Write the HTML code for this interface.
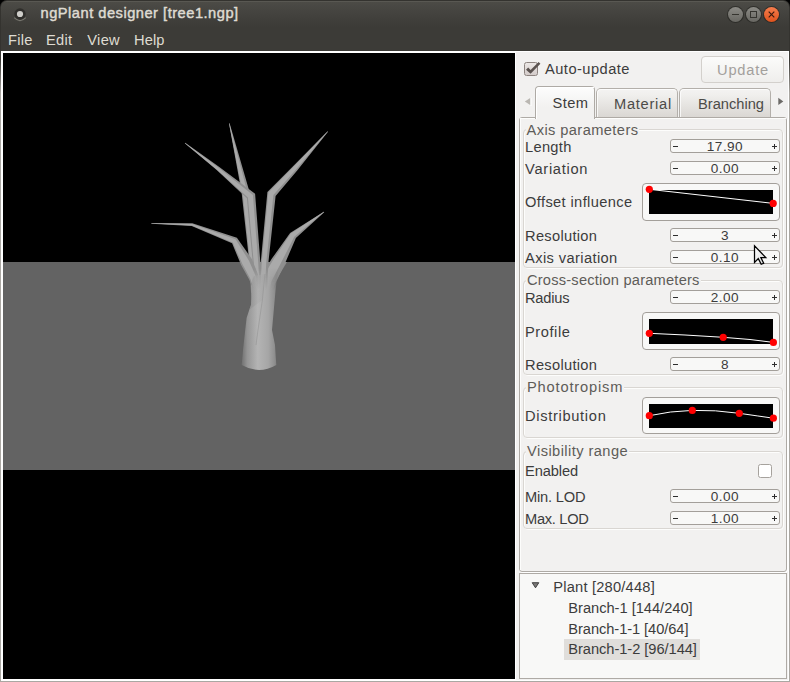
<!DOCTYPE html>
<html><head><meta charset="utf-8">
<style>
*{margin:0;padding:0;box-sizing:border-box}
html,body{width:790px;height:682px;overflow:hidden;background:#000}
body{position:relative;font-family:"Liberation Sans",sans-serif}
.a{position:absolute}
.t{position:absolute;white-space:pre;font-size:14.67px;line-height:14.67px;color:#3c3c3c;letter-spacing:0.3px}
#title{position:absolute;left:0;top:0;width:790px;height:51px;background:linear-gradient(#4c4b46 0px,#3c3b37 26px,#3c3b37 50px);border-radius:6px 6px 0 0}
.menu{position:absolute;white-space:pre;font-size:14.67px;line-height:14.67px;color:#dfdbd2;letter-spacing:0.3px}
.spin{position:absolute;left:670px;width:110px;height:14px;border:1px solid #a39f9a;border-radius:3px;background:#f8f8f7}
.spin .mi{position:absolute;left:2px;top:6px;width:5px;height:1px;background:#2e2e2e}
.spin .pl1{position:absolute;right:2px;top:6px;width:5px;height:1px;background:#2e2e2e}
.spin .pl2{position:absolute;right:4px;top:4px;width:1px;height:5px;background:#2e2e2e}
.spin .v{position:absolute;left:0;right:0;top:-0.5px;text-align:center;font-size:13.6px;line-height:14px;color:#3c3c3c;letter-spacing:0.45px}
.grp{position:absolute;left:523px;width:260px;border:1px solid #d6d3cf;border-radius:4px}
.gt{position:absolute;white-space:pre;font-size:14.67px;line-height:14.67px;color:#5e5c58;letter-spacing:0.3px;background:#f2f1f0;padding:0 1px}
.graph{position:absolute;left:642px;width:138px;border:1px solid #a39f9a;border-radius:4px;background:#f8f8f7}
</style></head><body>
<!-- title bar -->
<div class="a" style="left:0;top:0;width:790px;height:51px;border-radius:7px 7px 0 0;background:#34332f"></div>
<div class="a" style="left:1px;top:1px;width:788px;height:50px;border-radius:6px 6px 0 0;background:linear-gradient(#5f5e58 0px,#4d4c47 1.5px,#44433f 12px,#3c3b37 26px)"></div>
<div class="a" style="left:2px;top:2px;width:786px;height:49px;border-radius:5px 5px 0 0;background:linear-gradient(#4c4b46 0px,#44433f 11px,#3c3b37 25px)"></div>
<!-- app icon -->
<svg class="a" style="left:8px;top:2px" width="24" height="24"><path d="M6.2 15.6 Q12 21.5 17.8 15.6" fill="none" stroke="#77766f" stroke-width="1.3"/><circle cx="12" cy="12" r="5.7" fill="#2f2e2b"/><circle cx="12" cy="12" r="3.1" fill="#cfceca"/></svg>
<div class="a" style="left:40.5px;top:6px;white-space:pre;font-size:14.67px;line-height:14.67px;color:#dfdbd2;-webkit-text-stroke:0.45px #dfdbd2;letter-spacing:0.5px">ngPlant designer [tree1.ngp]</div>
<!-- window buttons -->
<div class="a" style="left:727px;top:6px;width:17px;height:17px;border-radius:50%;background:rgba(30,29,26,0.55)"></div>
<div class="a" style="left:728px;top:7px;width:15px;height:15px;border-radius:50%;background:linear-gradient(#8c8b86,#686762);"></div>
<div class="a" style="left:732px;top:14px;width:7px;height:1px;background:#35342f"></div>
<div class="a" style="left:745px;top:6px;width:17px;height:17px;border-radius:50%;background:rgba(30,29,26,0.55)"></div>
<div class="a" style="left:746px;top:7px;width:15px;height:15px;border-radius:50%;background:linear-gradient(#8c8b86,#686762);"></div>
<div class="a" style="left:750px;top:11px;width:7px;height:7px;border:1px solid #35342f"></div>
<div class="a" style="left:763px;top:6px;width:17px;height:17px;border-radius:50%;background:rgba(30,29,26,0.55)"></div>
<div class="a" style="left:764px;top:7px;width:15px;height:15px;border-radius:50%;background:linear-gradient(#f57d4d,#df531d);"></div>
<svg class="a" style="left:764px;top:7px" width="15" height="15"><path d="M4.7 4.7L10.3 10.3M10.3 4.7L4.7 10.3" stroke="#3a1a0e" stroke-width="1.15"/></svg>
<!-- menu -->
<div class="menu" style="left:8px;top:33px">File</div>
<div class="menu" style="left:46px;top:33px">Edit</div>
<div class="menu" style="left:87.3px;top:33px">View</div>
<div class="menu" style="left:134px;top:33px;letter-spacing:0.1px">Help</div>

<!-- window body -->
<div class="a" style="left:0;top:51px;width:790px;height:631px;background:linear-gradient(#3c3b37 0px,#3c3b37 10px,#aaa7a2 42px)"></div>
<div class="a" style="left:1px;top:51px;width:788px;height:630px;background:#fff"></div>
<div class="a" style="left:516px;top:52px;width:272px;height:628px;background:#f2f1f0"></div>
<!-- GL view -->
<div class="a" style="left:3px;top:53px;width:512px;height:626px;background:#000"></div>
<div class="a" style="left:3px;top:262px;width:512px;height:208px;background:#636363"></div>

<!-- TREE -->
<svg class="a" style="left:0;top:0" width="515" height="682">
<defs><linearGradient id="tg" gradientUnits="userSpaceOnUse" x1="242" y1="0" x2="277" y2="0"><stop offset="0" stop-color="#737373"/><stop offset="0.15" stop-color="#959595"/><stop offset="0.45" stop-color="#b4b4b4"/><stop offset="0.75" stop-color="#a6a6a6"/><stop offset="0.92" stop-color="#909090"/><stop offset="1" stop-color="#7e7e7e"/></linearGradient><linearGradient id="tg2" gradientUnits="userSpaceOnUse" x1="250" y1="0" x2="278" y2="0"><stop offset="0" stop-color="#8a8a8a"/><stop offset="0.3" stop-color="#aaaaaa"/><stop offset="0.55" stop-color="#a0a0a0"/><stop offset="0.75" stop-color="#b2b2b2"/><stop offset="1" stop-color="#8e8e8e"/></linearGradient><linearGradient id="fm" gradientUnits="userSpaceOnUse" x1="0" y1="268" x2="0" y2="290"><stop offset="0" stop-color="#fff" stop-opacity="0"/><stop offset="1" stop-color="#fff" stop-opacity="1"/></linearGradient><mask id="tm" maskUnits="userSpaceOnUse" x="200" y="250" width="120" height="150"><rect x="200" y="250" width="120" height="150" fill="url(#fm)"/></mask></defs>
<polygon points="241,262 287,262 277,278.5 253,277.5" fill="#8c8c8c"/>
<polygon points="229.0,123.5 241.6,192.6 249.3,262.2 251.0,292.1 254.5,315.0 255.5,315.0 257.0,291.9 255.7,261.8 249.4,191.4 229.6,123.3" fill="#8f8f8f"/>
<polygon points="229.1,123.5 242.6,192.5 250.1,262.2 251.8,292.1 254.6,315.0 255.2,315.0 255.3,291.9 253.9,261.9 247.2,191.7 229.4,123.4" fill="#aaaaaa"/>
<polygon points="184.8,143.2 216.7,170.1 246.9,198.2 252.7,262.3 254.0,292.2 258.5,315.0 259.5,315.0 262.0,291.8 260.3,261.7 255.1,193.8 219.3,166.9 185.2,142.8" fill="#8f8f8f"/>
<polygon points="184.9,143.2 217.0,169.7 247.9,197.6 253.7,262.2 255.0,292.1 258.6,315.0 259.2,315.0 259.8,291.9 258.2,261.9 252.9,195.0 218.6,167.8 185.1,142.9" fill="#aaaaaa"/>
<polygon points="151.4,223.7 191.7,225.9 232.1,243.2 241.0,264.8 249.2,279.5 257.5,300.1 258.5,299.9 258.8,276.5 252.0,259.2 236.9,237.8 192.3,223.3 151.4,223.1" fill="#8f8f8f"/>
<polygon points="151.4,223.6 191.8,225.6 232.8,242.5 242.4,264.1 250.4,279.1 257.6,300.1 258.2,300.0 256.2,277.3 249.0,260.7 235.6,239.2 192.1,224.0 151.4,223.3" fill="#aaaaaa"/>
<polygon points="323.8,211.8 290.1,232.9 271.9,258.6 260.2,277.6 265.5,305.0 266.5,305.0 275.8,282.4 284.1,265.4 295.9,238.1 324.2,212.2" fill="#8f8f8f"/>
<polygon points="323.9,211.8 290.8,233.6 273.4,259.4 262.1,278.2 265.6,305.0 266.2,305.0 271.6,281.1 280.7,263.5 294.3,236.7 324.1,212.1" fill="#aaaaaa"/>
<polygon points="327.6,131.3 292.8,166.5 267.4,192.1 260.8,261.7 259.0,291.9 262.5,318.0 263.5,318.0 267.0,292.1 268.4,262.3 275.6,195.9 297.2,170.5 328.0,131.7" fill="#8f8f8f"/>
<polygon points="327.6,131.4 293.3,167.0 268.4,192.6 261.8,261.8 260.0,291.9 262.6,318.0 263.2,318.0 264.8,292.0 266.3,262.1 273.4,194.9 296.0,169.4 327.9,131.6" fill="#aaaaaa"/>
<path d="M254,268 L252.3,280 L251,305 L249.2,310 L246.6,318 L245.2,330 L243,350 L241.7,365 Q259,375 276.3,365 L275,345 L272,330 L273.8,310 L275.6,290 L276.9,279 L279,268 Z" fill="url(#tg)" mask="url(#tm)"/>
<path d="M254,276 L252.3,280 L251,305 L249.2,310 L262.4,300 L265,274 Z" fill="url(#tg2)" opacity="0.5"/>
<path d="M265,274 L262.4,300 L258,330 L256,345" fill="none" stroke="#939393" stroke-width="0.6"/>
</svg>
<!-- /TREE -->
<!-- right panel -->
<!-- checkbox -->
<div class="a" style="left:524px;top:62px;width:14px;height:14px;border:1px solid #8d8480;border-radius:2.5px;background:linear-gradient(#ebe7e5,#d4ccca)"></div>
<svg class="a" style="left:520px;top:56px" width="24" height="24"><polygon points="6,13.8 8.2,11.6 10.6,14 18.6,6 20.4,7.8 10.6,17.8" fill="#5b5350"/></svg>
<div class="t" style="left:545px;top:61.5px;letter-spacing:0.46px">Auto-update</div>
<!-- update button -->
<div class="a" style="left:701px;top:56px;width:83px;height:27px;border:1px solid #d3d0cc;border-radius:4px;background:linear-gradient(#fbfbfa,#efeeec)"></div>
<div class="t" style="left:717px;top:63px;color:#a3a09c;letter-spacing:0.8px">Update</div>

<!-- PANEL -->
<div class="a" style="left:520px;top:118px;width:268px;height:455px;border-radius:3px;background:#fff"></div>
<div class="a" style="left:519px;top:117px;width:268px;height:455px;border:1px solid #aeaaa5;border-radius:3px;background:#f2f1f0"></div>
<div class="a" style="left:520px;top:118px;width:266px;height:1px;background:#fdfdfc"></div>
<div class="a" style="left:520px;top:118px;width:1px;height:452px;background:#fdfdfc"></div>
<div class="a" style="left:596px;top:88px;width:82px;height:29px;border:1px solid #b3afaa;border-bottom:none;border-radius:5px 5px 0 0;background:linear-gradient(#f4f3f2,#f0efed 6px,#dad7d3)"></div>
<div class="a" style="left:597px;top:89px;width:80px;height:28px;border:1px solid rgba(255,255,255,0.75);border-bottom:none;border-right:none;border-radius:4px 4px 0 0"></div>
<div class="t" style="left:614px;top:97px;color:#4c4b48;letter-spacing:0.72px">Material</div>
<div class="a" style="left:679px;top:88px;width:92px;height:29px;border:1px solid #b3afaa;border-bottom:none;border-radius:5px 5px 0 0;background:linear-gradient(#f4f3f2,#f0efed 6px,#dad7d3)"></div>
<div class="a" style="left:680px;top:89px;width:90px;height:28px;border:1px solid rgba(255,255,255,0.75);border-bottom:none;border-right:none;border-radius:4px 4px 0 0"></div>
<div class="t" style="left:698px;top:97px;color:#4c4b48;letter-spacing:0px">Branching</div>
<div class="a" style="left:535px;top:86px;width:60px;height:33px;border:1px solid #aeaaa5;border-bottom:none;border-radius:4px 4px 0 0;background:linear-gradient(#fdfdfd,#f2f1f0 20px)"></div>
<div class="a" style="left:536px;top:87px;width:58px;height:32px;border:1px solid #fff;border-bottom:none;border-right:none;border-radius:4px 0 0 0"></div>
<div class="t" style="left:552.5px;top:96px;letter-spacing:0.4px">Stem</div>
<svg class="a" style="left:522px;top:96px" width="12" height="12"><path d="M9 2L9 10" stroke="#fff" stroke-width="1"/><path d="M8.2 2L2.8 5.5L8.2 9Z" fill="#bab7b2"/></svg>
<svg class="a" style="left:776px;top:96px" width="12" height="12"><path d="M2.3 1.8L7.3 5.4L2.3 9Z" fill="#6c6a67"/></svg>
<div class="a" style="left:524px;top:130px;width:260px;height:139px;border:1px solid #fdfdfc;border-radius:4px"></div>
<div class="a" style="left:523px;top:129px;width:260px;height:139px;border:1px solid #d9d6d2;border-radius:4px"></div>
<div class="gt" style="left:525.5px;top:123px;letter-spacing:0.4px">Axis parameters</div>
<div class="a" style="left:524px;top:281px;width:260px;height:95px;border:1px solid #fdfdfc;border-radius:4px"></div>
<div class="a" style="left:523px;top:280px;width:260px;height:95px;border:1px solid #d9d6d2;border-radius:4px"></div>
<div class="gt" style="left:526px;top:273px;letter-spacing:0.2px">Cross-section parameters</div>
<div class="a" style="left:524px;top:388px;width:260px;height:51px;border:1px solid #fdfdfc;border-radius:4px"></div>
<div class="a" style="left:523px;top:387px;width:260px;height:51px;border:1px solid #d9d6d2;border-radius:4px"></div>
<div class="gt" style="left:526px;top:380px;letter-spacing:0.83px">Phototropism</div>
<div class="a" style="left:524px;top:452px;width:260px;height:78px;border:1px solid #fdfdfc;border-radius:4px"></div>
<div class="a" style="left:523px;top:451px;width:260px;height:78px;border:1px solid #d9d6d2;border-radius:4px"></div>
<div class="gt" style="left:526px;top:444px;letter-spacing:0.43px">Visibility range</div>
<div class="t" style="left:525px;top:140px">Length</div>
<div class="t" style="left:525px;top:162px;letter-spacing:0.72px">Variation</div>
<div class="t" style="left:525px;top:195px;letter-spacing:0.37px">Offset influence</div>
<div class="t" style="left:525px;top:229px">Resolution</div>
<div class="t" style="left:525px;top:251px;letter-spacing:0.39px">Axis variation</div>
<div class="t" style="left:525px;top:291px;letter-spacing:-0.22px">Radius</div>
<div class="t" style="left:525px;top:324.5px;letter-spacing:0.55px">Profile</div>
<div class="t" style="left:525px;top:358px">Resolution</div>
<div class="t" style="left:525px;top:409px;letter-spacing:0.68px">Distribution</div>
<div class="t" style="left:525px;top:464px;letter-spacing:-0.12px">Enabled</div>
<div class="t" style="left:525px;top:490px;letter-spacing:-0.2px">Min. LOD</div>
<div class="t" style="left:525px;top:512px;letter-spacing:-0.3px">Max. LOD</div>
<div class="spin" style="top:139px"><div class="mi"></div><div class="pl1"></div><div class="pl2"></div><div class="v">17.90</div></div>
<div class="spin" style="top:161px"><div class="mi"></div><div class="pl1"></div><div class="pl2"></div><div class="v">0.00</div></div>
<div class="spin" style="top:228px"><div class="mi"></div><div class="pl1"></div><div class="pl2"></div><div class="v">3</div></div>
<div class="spin" style="top:250px"><div class="mi"></div><div class="pl1"></div><div class="pl2"></div><div class="v">0.10</div></div>
<div class="spin" style="top:290px"><div class="mi"></div><div class="pl1"></div><div class="pl2"></div><div class="v">2.00</div></div>
<div class="spin" style="top:357px"><div class="mi"></div><div class="pl1"></div><div class="pl2"></div><div class="v">8</div></div>
<div class="spin" style="top:489px"><div class="mi"></div><div class="pl1"></div><div class="pl2"></div><div class="v">0.00</div></div>
<div class="spin" style="top:511px"><div class="mi"></div><div class="pl1"></div><div class="pl2"></div><div class="v">1.00</div></div>
<div class="graph" style="top:183px;height:38px"></div>
<div class="graph" style="top:312px;height:38px"></div>
<div class="graph" style="top:397px;height:37px"></div>
<svg class="a" style="left:640px;top:180px" width="145" height="260">
<rect x="9" y="10" width="124" height="24" fill="#000"/>
<polyline points="9.3,9.3 133.2,23.4" fill="none" stroke="#fff" stroke-width="1"/>
<circle cx="9.3" cy="9.3" r="3.6" fill="#f00"/><circle cx="133.2" cy="23.4" r="3.6" fill="#f00"/>
<rect x="9" y="139" width="124" height="25" fill="#000"/>
<polyline points="9.3,153.3 45,155 83.2,157.3 110,159.5 133.4,162.4" fill="none" stroke="#fff" stroke-width="1"/>
<circle cx="9.3" cy="153.3" r="3.6" fill="#f00"/><circle cx="83.2" cy="157.3" r="3.6" fill="#f00"/><circle cx="133.4" cy="162.4" r="3.6" fill="#f00"/>
<rect x="9" y="224" width="124" height="24" fill="#000"/>
<path d="M9.3 235.7 Q 30 231 52.3 230.4 Q 75 229.8 99.3 233.3 Q 118 236 133.4 238.2" fill="none" stroke="#fff" stroke-width="1"/>
<circle cx="9.3" cy="235.7" r="3.6" fill="#f00"/><circle cx="52.3" cy="230.4" r="3.6" fill="#f00"/><circle cx="99.3" cy="233.3" r="3.6" fill="#f00"/><circle cx="133.4" cy="238.2" r="3.6" fill="#f00"/>
</svg>
<div class="a" style="left:758px;top:464px;width:14px;height:14px;border:1px solid #a6a29d;border-radius:2.5px;background:#fff"></div>
<div class="a" style="left:519px;top:573px;width:268px;height:106px;border:1px solid #aeaaa5;background:#f8f8f7"></div>
<svg class="a" style="left:528px;top:578px" width="16" height="16"><path d="M4.2 4.7L10.8 4.7L7.5 9.8Z" fill="#7a7977" stroke="#343434" stroke-width="0.9" stroke-linejoin="round"/></svg>
<div class="a" style="left:564px;top:639px;width:136px;height:21px;background:#e0dedb"></div>
<div class="t" style="left:553.3px;top:580px;letter-spacing:0.2px">Plant [280/448]</div>
<div class="t" style="left:568.3px;top:601px;letter-spacing:-0.02px">Branch-1 [144/240]</div>
<div class="t" style="left:568.3px;top:622px;letter-spacing:-0.07px">Branch-1-1 [40/64]</div>
<div class="t" style="left:568.3px;top:642px;letter-spacing:-0.05px">Branch-1-2 [96/144]</div>
<!-- cursor -->
<svg class="a" style="left:753px;top:244px" width="16" height="22"><defs><linearGradient id="cg" x1="0" y1="0" x2="1" y2="1"><stop offset="0" stop-color="#fff"/><stop offset="1" stop-color="#d8d8d8"/></linearGradient></defs><path d="M1.5 1.8L1.5 18.5L5.3 14.6L8.2 20.3L10.7 19.2L7.9 13.6L12.8 13.6Z" fill="url(#cg)" stroke="#000" stroke-width="1.25" stroke-linejoin="miter"/></svg>
<!-- /PANEL -->
</body></html>
